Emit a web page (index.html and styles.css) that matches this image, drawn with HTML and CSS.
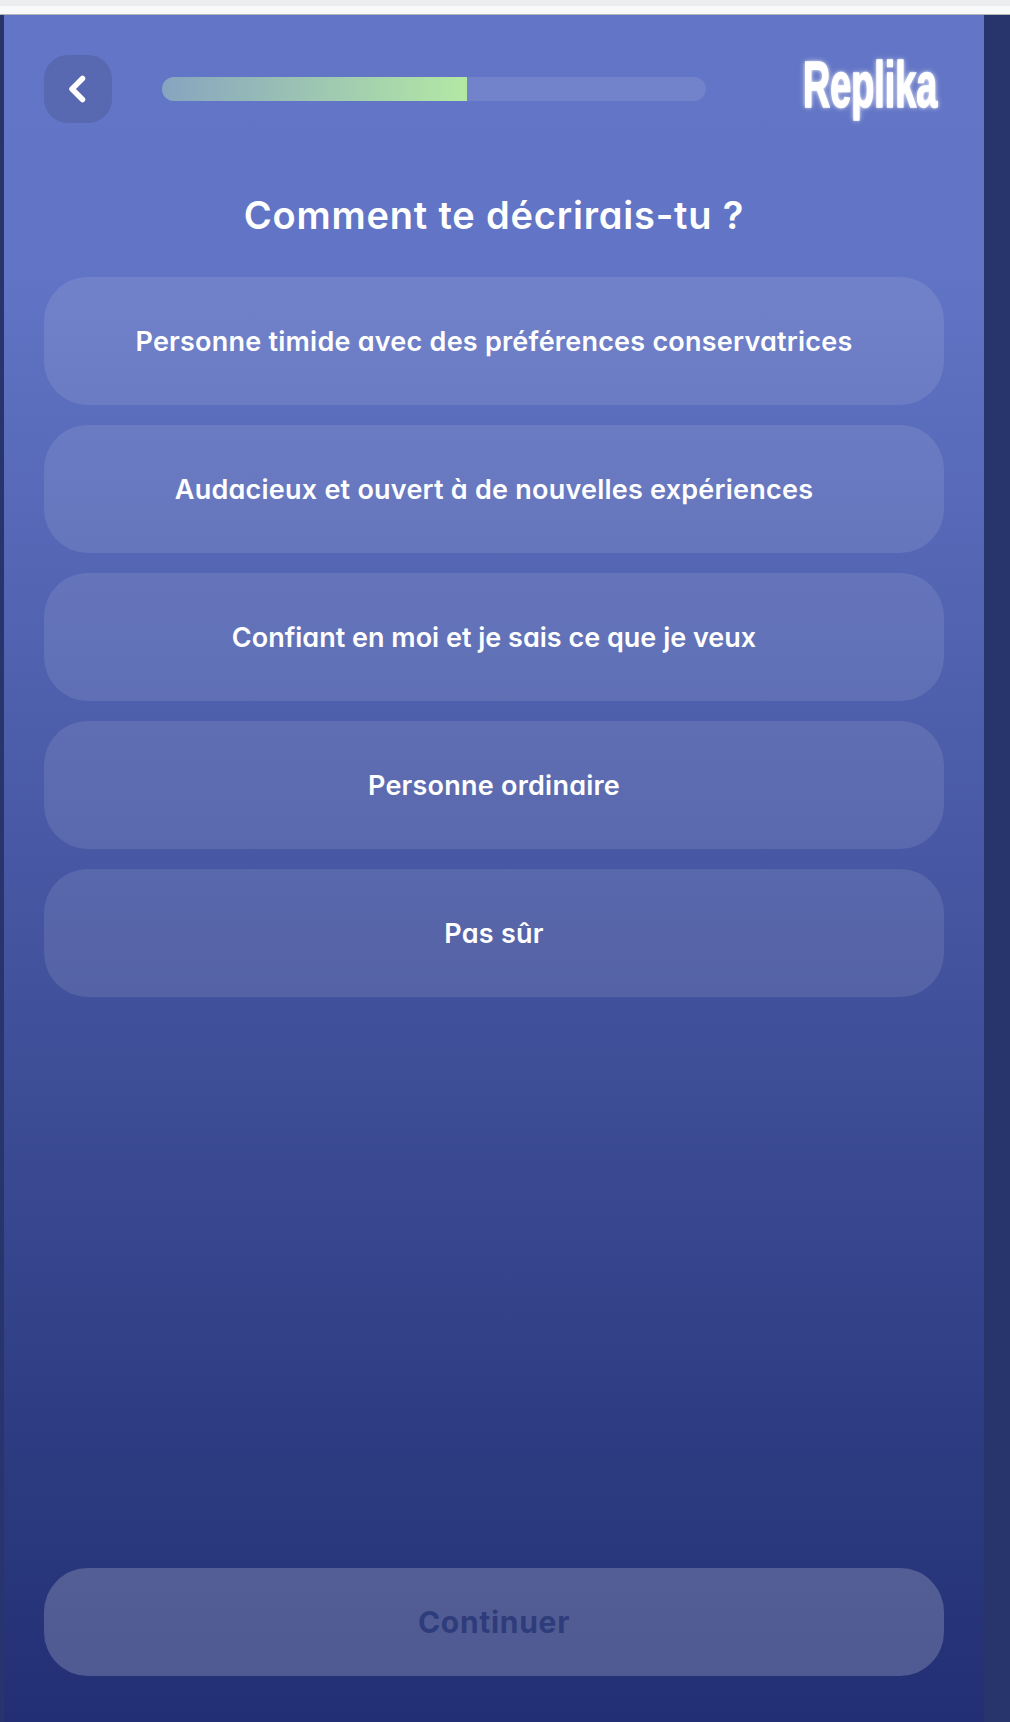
FILE: index.html
```html
<!DOCTYPE html>
<html lang="fr">
<head>
<meta charset="utf-8">
<title>Replika</title>
<link rel="stylesheet" href="styles.css">
</head>
<body>
<div class="chrome"><div class="chrome-top"></div><div class="chrome-bottom"></div></div>
<div class="stage">
  <main class="panel">
    <header class="header">
      <button class="back" type="button" aria-label="Retour">
        <svg width="68" height="68" viewBox="0 0 68 68" fill="none"><path d="M38.5 23.5 28 34l10.5 10.5" stroke="#fff" stroke-width="5.5" stroke-linecap="round" stroke-linejoin="round"/></svg>
      </button>
      <div class="progress"><div class="progress-fill"></div></div>
      <div class="logo"><span class="logo-text">Replika</span></div>
    </header>
    <h1 class="title">Comment te décrirais-tu ?</h1>
    <div class="options">
      <button class="option" type="button">Personne timide avec des préférences conservatrices</button>
      <button class="option" type="button">Audacieux et ouvert à de nouvelles expériences</button>
      <button class="option option-tight" type="button">Confiant en moi et je sais ce que je veux</button>
      <button class="option" type="button">Personne ordinaire</button>
      <button class="option" type="button">Pas sûr</button>
    </div>
    <button class="continue" type="button">Continuer</button>
  </main>
</div>
</body>
</html>
```
FILE: styles.css
```css
* { box-sizing: border-box; }
html, body { margin: 0; padding: 0; }
body {
  width: 1010px;
  height: 1722px;
  overflow: hidden;
  font-family: "Inter", "Noto Sans", sans-serif;
  font-feature-settings: "cv11" 1;
  background: #28346c;
  color: #fff;
  display: flex;
  flex-direction: column;
}
.chrome { flex: none; }
.chrome-top { height: 6px; background: #ecedef; }
.chrome-bottom { height: 9px; background: #f8f9fa; border-bottom: 1px solid #b4b5b8; }
.stage { flex: 1; display: flex; padding-left: 4px; padding-right: 26px; min-height: 0; }
.panel {
  flex: 1;
  display: flex;
  flex-direction: column;
  padding: 40px 40px 46px;
  background: linear-gradient(180deg, #6275c6 0%, #6174c5 15%, #4757a3 50%, #2c3b80 85%, #232f75 100%);
}
.header { display: flex; align-items: center; height: 68px; }
.back {
  flex: none;
  width: 68px;
  height: 68px;
  padding: 0;
  border: 0;
  border-radius: 24px;
  background: rgba(0, 0, 0, 0.1);
  display: block;
}
.back svg { display: block; }
.progress {
  flex: none;
  width: 544px;
  height: 24px;
  margin-left: 50px;
  border-radius: 12px;
  overflow: hidden;
  background: rgba(255, 255, 255, 0.1);
}
.progress-fill {
  width: 305px;
  height: 100%;
  background: linear-gradient(90deg, #87a4c0 0%, #b3e8a4 100%);
}
.logo { flex: 1; display: flex; justify-content: flex-end; padding-right: 7px; }
.logo-text {
  display: block;
  width: 134px;
  margin-top: -9px;
  font-family: "Liberation Sans", sans-serif;
  font-weight: 700;
  font-size: 65px;
  line-height: 68px;
  white-space: nowrap;
  transform: scaleX(0.58);
  transform-origin: left center;
  -webkit-text-stroke: 1.5px #fff;
  text-shadow: 0 0 4px #fff, 0 0 9px rgba(255, 255, 255, 0.7);
}
.title {
  margin: 62px 0 0;
  height: 60px;
  font-size: 38px;
  line-height: 60px;
  font-weight: 600;
  text-align: center;
  letter-spacing: 0.8px;
}
.options { display: flex; flex-direction: column; gap: 20px; margin-top: 32px; flex: 1; }
.option {
  height: 128px;
  border: 0;
  padding: 0 20px;
  border-radius: 44px;
  background: rgba(255, 255, 255, 0.1);
  color: #fff;
  font-family: inherit;
  font-feature-settings: inherit;
  font-size: 27px;
  font-weight: 600;
  letter-spacing: 0.23px;
  text-align: center;
}
.option-tight { letter-spacing: 0; }
.continue {
  flex: none;
  height: 108px;
  border: 0;
  border-radius: 44px;
  background: rgba(255, 255, 255, 0.2);
  color: #2f3c7c;
  font-family: inherit;
  font-feature-settings: inherit;
  font-size: 30px;
  font-weight: 700;
  letter-spacing: 0.7px;
}
```
